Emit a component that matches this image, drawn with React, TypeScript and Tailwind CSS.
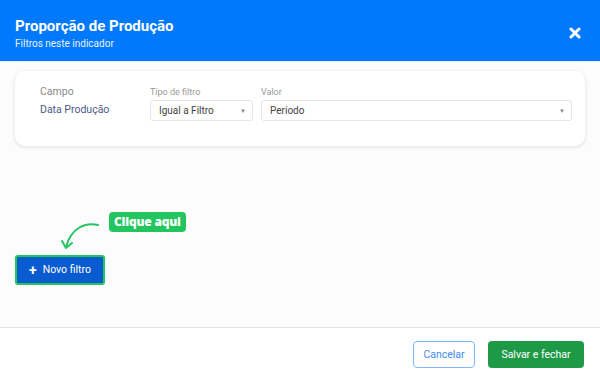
import React from "react";

const Select = ({ value, className }: { value: string; className?: string }) => {
  return (
    <div
      className={`flex h-[21px] items-center justify-between rounded-[3px] border border-[#e6e6e6] bg-white pl-[8px] pr-[6px] ${className ?? ""}`}
    >
      <span className="text-[10px] text-[#444]">{value}</span>
      <span className="text-[6px] leading-none text-[#888]">▼</span>
    </div>
  );
};

const App = () => {
  return (
    <div className="flex h-[375px] w-[600px] flex-col bg-[#fcfcfc] font-['Roboto',sans-serif]">
      <div className="flex h-[61px] items-start justify-between bg-[#0079fd] pl-[15px] pr-[19px] pt-[17px] shadow-[0_1px_0_#e4efff]">
        <div className="flex flex-col">
          <h1 className="text-[15px] font-bold leading-[18px] text-white">Proporção de Produção</h1>
          <p className="mt-[2px] text-[10px] leading-[13px] text-[#e8f1ff]">Filtros neste indicador</p>
        </div>
        <svg width="12" height="12" viewBox="0 0 12 12" className="mt-[10px]">
          <path d="M2 2 L10 10 M10 2 L2 10" stroke="white" strokeWidth="3" strokeLinecap="round" />
        </svg>
      </div>

      <div className="px-[15px] pt-[10px]">
        <div className="flex h-[75px] items-start gap-[8px] rounded-[10px] bg-white pl-[25px] pr-[13px] pt-[14px] shadow-[0_1px_4px_rgba(0,0,0,0.12)]">
          <div className="w-[102px]">
            <p className="text-[10.5px] leading-[14px] text-[#8a8a8a]">Campo</p>
            <p className="mt-[4px] text-[10.5px] leading-[14px] text-[#4b5a86]">Data Produção</p>
          </div>
          <div className="w-[103px]">
            <p className="text-[9px] leading-[14px] text-[#9a9a9a]">Tipo de filtro</p>
            <Select value="Igual a Filtro" className="mt-[1px]" />
          </div>
          <div className="flex-1">
            <p className="text-[9px] leading-[14px] text-[#9a9a9a]">Valor</p>
            <Select value="Período" className="mt-[1px]" />
          </div>
        </div>
      </div>

      <div className="flex flex-col pl-[15px] pt-[66px]">
        <div className="flex items-start">
          <svg width="40" height="34" viewBox="0 0 40 34" className="ml-[46px] mt-[10px]">
            <path d="M37 3 C 24 0, 10 6, 5 25" fill="none" stroke="#22c55e" strokeWidth="2" strokeLinecap="round" />
            <path d="M1 19 L5 26 L11 21" fill="none" stroke="#22c55e" strokeWidth="2" strokeLinecap="round" strokeLinejoin="round" />
          </svg>
          <span className="ml-[8px] rounded-[4px] bg-[#22c55e] px-[5px] py-[3px] font-['Open_Sans',sans-serif] text-[12px] font-extrabold leading-[14px] tracking-[-0.2px] text-white">
            Clique aqui
          </span>
        </div>
        <button className="-mt-[1px] flex h-[30px] w-[90px] items-center justify-center gap-[6px] rounded-[3px] border-2 border-[#22c55e] bg-[#0a5bd0] text-[10.5px] text-white">
          <span className="text-[14px] font-bold leading-none">+</span>
          Novo filtro
        </button>
      </div>

      <div className="mt-auto flex h-[48px] items-start justify-end gap-[13px] border-t border-[#e4e4e4] bg-white pr-[16px] pt-[13px]">
        <button className="h-[27px] w-[62px] rounded-[4px] border border-[#7fb7ff] bg-white text-[10.5px] text-[#3d8bf2]">
          Cancelar
        </button>
        <button className="h-[27px] w-[96px] rounded-[4px] bg-[#1e9a47] text-[10.5px] text-white">
          Salvar e fechar
        </button>
      </div>
    </div>
  );
};

export default App;
